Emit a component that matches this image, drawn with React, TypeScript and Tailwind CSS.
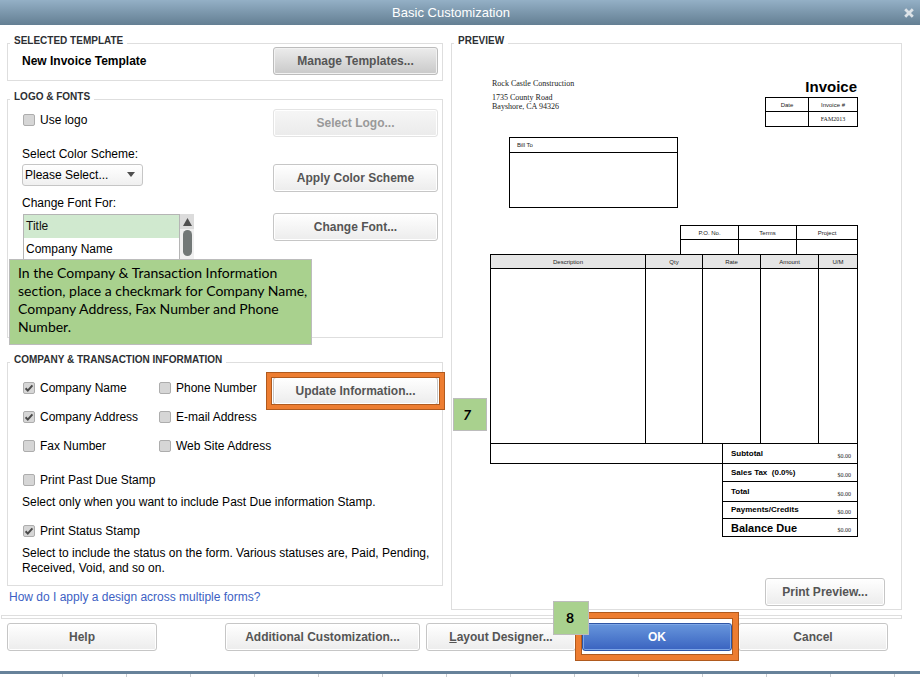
import React, { useState } from 'react';
import clsx from 'clsx';

type PanelProps = {
  title: string;
  children: React.ReactNode;
};

const Panel = ({ title, children }: PanelProps) => (
  <fieldset className="min-w-0 border border-[#dedede] px-[2px]">
    <legend className="px-1 pb-1 text-[10px] leading-[10px] font-bold text-[#2d2f33]">{title}</legend>
    {children}
  </fieldset>
);

type ButtonProps = React.ButtonHTMLAttributes<HTMLButtonElement> & {
  tone?: 'light' | 'dark' | 'primary';
};

const Button = ({ tone = 'light', className, children, ...rest }: ButtonProps) => (
  <button
    type="button"
    className={clsx(
      'block h-7 rounded-[3px] border text-center text-[12px] leading-4 font-bold whitespace-nowrap',
      tone === 'light' &&
        'border-[#c6c6c6] bg-linear-to-b from-white to-[#ececec] text-[#555555] shadow-[inset_0_0_0_1px_#ffffff] disabled:border-[#e4e4e4] disabled:from-[#f6f6f6] disabled:to-[#ebebeb] disabled:text-[#999999]',
      tone === 'dark' &&
        'border-[#bcbcbc] bg-linear-to-b from-[#ececec] to-[#c9c9c9] text-[#555555] shadow-[inset_0_0_0_1px_#f2f2f2]',
      tone === 'primary' &&
        'border-[#2f56a5] bg-linear-to-b from-[#6896dc] to-[#3a63c0] text-white shadow-[inset_0_0_0_1px_#7ea6e6]',
      className
    )}
    {...rest}
  >
    {children}
  </button>
);

type CheckProps = {
  label: string;
  defaultChecked?: boolean;
};

const Check = ({ label, defaultChecked }: CheckProps) => (
  <label className="flex h-4 items-center gap-[5px] pl-px whitespace-nowrap">
    <span className="relative block size-3">
      <input
        type="checkbox"
        defaultChecked={defaultChecked}
        className="peer block size-3 appearance-none rounded-[2px] border border-[#adadad] bg-[#d6d6d6]"
      />
      <svg
        viewBox="0 0 12 12"
        className="pointer-events-none absolute inset-0 hidden size-3 peer-checked:block"
        fill="none"
        stroke="#4a4a4a"
        strokeWidth="2"
      >
        <path d="M2.6 6.2 L4.8 8.6 L9.4 3.4" />
      </svg>
    </span>
    {label}
  </label>
);

/* Orange frame drawn around a button that the step points at */
const frame =
  'pointer-events-none absolute border-[#ed7d31] shadow-[0_0_0_1px_#b05a1e,inset_0_0_0_1px_#b05a1e]';

const note = 'absolute border border-[#bcbcbc] bg-[#a9d18e] text-black';

const table = 'table-fixed border-separate border-spacing-0 border-t border-l border-black';
const cell = 'border-r border-b border-black p-0 font-normal leading-[6px]';

const fonts = ['Title', 'Company Name', 'Company Address', 'Labels', 'Data'];

const totals = [
  { label: 'Subtotal', height: 'h-[20px]' },
  { label: 'Sales Tax  (0.0%)', height: 'h-[18px]' },
  { label: 'Total', height: 'h-[20px]' },
  { label: 'Payments/Credits', height: 'h-[17px]' },
  { label: 'Balance Due', height: 'h-[18px]', large: true },
];

const LogoAndFonts = () => {
  const [font, setFont] = useState('Title');

  return (
    <div className="relative mt-[11px]">
      <Panel title="LOGO & FONTS">
        <div className="-mt-[3px] flex justify-between pr-[2px] pb-[7px] pl-3">
          <div className="pt-[9px] leading-4">
            <Check label="Use logo" />
            <label htmlFor="scheme" className="mt-[18px] block">
              Select Color Scheme:
            </label>
            <div className="relative mt-[2px] w-[121px]">
              <select
                id="scheme"
                className="block h-[22px] w-full appearance-none rounded-[3px] border border-[#c6c6c6] bg-linear-to-b from-white to-[#f0f0f0] pl-[2px] text-[12px] text-black"
              >
                <option>Please Select...</option>
              </select>
              <svg viewBox="0 0 8 5" className="pointer-events-none absolute top-2 right-2 h-[5px] w-2" fill="#4f4f4f">
                <path d="M0 0h8L4 5z" />
              </svg>
            </div>
            <label htmlFor="font" className="mt-[9px] block">
              Change Font For:
            </label>
            <div className="mt-[3px] ml-px flex h-[116px] w-[171px]">
              <select
                id="font"
                size={5}
                value={font}
                onChange={(e) => setFont(e.target.value)}
                className="block h-full min-w-0 flex-1 overflow-hidden rounded-none border border-[#b5b5b5] bg-white p-0 text-[12px] text-black outline-none [scrollbar-width:none]"
              >
                {fonts.map((name) => (
                  <option
                    key={name}
                    value={name}
                    className="h-[23px] px-[2px] pt-1 pb-0 leading-4 checked:bg-[#d0e9cf] checked:bg-linear-to-b checked:from-[#d0e9cf] checked:to-[#d0e9cf]"
                  >
                    {name}
                  </option>
                ))}
              </select>
              <div className="flex w-[14px] flex-col items-center bg-[#f0f0f0]">
                <div className="flex h-[15px] w-full items-center justify-center bg-[#dcdcdc]">
                  <svg viewBox="0 0 9 8" className="h-2 w-[9px]" fill="#505050">
                    <path d="M4.5 0L9 8H0z" />
                  </svg>
                </div>
                <div className="mt-px h-[26px] w-[9px] rounded-full bg-[#727877]" />
              </div>
            </div>
          </div>
          <div className="pt-[6px]">
            <Button disabled className="w-[165px]">
              Select Logo...
            </Button>
            <Button className="mt-[27px] w-[165px]">Apply Color Scheme</Button>
            <Button className="mt-[21px] w-[165px]">Change Font...</Button>
          </div>
        </div>
      </Panel>
      <p
        className={clsx(
          note,
          'top-[167px] left-[2px] h-[86px] w-[303px] pt-1 pl-2 font-[Lato,sans-serif] text-[14px] leading-[18px] [font-variant-ligatures:none]'
        )}
      >
        In the Company &amp; Transaction Information section, place a checkmark for Company Name, Company Address, Fax
        Number and Phone Number.
      </p>
    </div>
  );
};

const CompanyInfo = () => (
  <div className="mt-[17px]">
    <Panel title="COMPANY & TRANSACTION INFORMATION">
      <div className="-mt-[3px] pr-[2px] pb-[9px] pl-3">
        <div className="flex justify-between">
          <div className="grid grid-cols-[136px_auto] gap-y-[13px] pt-[14px]">
            <Check label="Company Name" defaultChecked />
            <Check label="Phone Number" />
            <Check label="Company Address" defaultChecked />
            <Check label="E-mail Address" />
            <Check label="Fax Number" />
            <Check label="Web Site Address" />
          </div>
          <div className="relative mt-[11px] h-7">
            <Button className="w-[165px]">Update Information...</Button>
            <span className={clsx(frame, '-inset-x-[6px] -inset-y-1 border-4')} />
          </div>
        </div>
        <div className="mt-[18px]">
          <Check label="Print Past Due Stamp" />
        </div>
        <p className="mt-[7px] leading-[15px]">Select only when you want to include Past Due information Stamp.</p>
        <div className="mt-[13px]">
          <Check label="Print Status Stamp" defaultChecked />
        </div>
        <p className="mt-[7px] leading-[15px]">
          Select to include the status on the form. Various statuses are, Paid, Pending, Received, Void, and so on.
        </p>
      </div>
    </Panel>
  </div>
);

const Invoice = () => (
  <div className="mr-[41px] ml-[36px] pt-7 text-[6px] leading-[6px] text-[#222222]">
    <div className="flex justify-between">
      <address className="pl-[2px] font-['Liberation_Serif',serif] text-[8px] leading-[9px] not-italic">
        <p className="mb-[3px] leading-3">Rock Castle Construction</p>
        <p>1735 County Road</p>
        <p>Bayshore, CA 94326</p>
      </address>
      <div className="w-[93px]">
        <h2 className="mb-px pr-px text-right text-[15px] leading-[18px] font-bold text-black">Invoice</h2>
        <table className={clsx(table, 'w-full')}>
          <thead>
            <tr className="h-[14px]">
              <th className={clsx(cell, 'w-[43px]')}>Date</th>
              <th className={cell}>Invoice #</th>
            </tr>
          </thead>
          <tbody>
            <tr className="h-[15px] text-center">
              <td className={cell} />
              <td className={clsx(cell, "font-['Liberation_Serif',serif]")}>FAM2013</td>
            </tr>
          </tbody>
        </table>
      </div>
    </div>

    <table className={clsx(table, 'mt-[10px] ml-[19px] w-[169px]')}>
      <thead>
        <tr className="h-[15px] text-left">
          <th className={clsx(cell, 'pl-[7px]')}>Bill To</th>
        </tr>
      </thead>
      <tbody>
        <tr className="h-[55px]">
          <td className={cell} />
        </tr>
      </tbody>
    </table>

    <table className={clsx(table, 'mt-[17px] ml-auto w-[178px]')}>
      <thead>
        <tr className="h-[14px]">
          <th className={clsx(cell, 'w-[58px]')}>P.O. No.</th>
          <th className={clsx(cell, 'w-[58px]')}>Terms</th>
          <th className={cell}>Project</th>
        </tr>
      </thead>
      <tbody>
        <tr className="h-[14px]">
          <td className="border-r border-black p-0" />
          <td className="border-r border-black p-0" />
          <td className="border-r border-black p-0" />
        </tr>
      </tbody>
    </table>

    <table className={clsx(table, 'w-full')}>
      <thead>
        <tr className="h-[14px] bg-[#e5e5e5]">
          <th className={cell}>Description</th>
          <th className={clsx(cell, 'w-[57px]')}>Qty</th>
          <th className={clsx(cell, 'w-[58px]')}>Rate</th>
          <th className={clsx(cell, 'w-[58px]')}>Amount</th>
          <th className={clsx(cell, 'w-[39px]')}>U/M</th>
        </tr>
      </thead>
      <tbody>
        <tr className="h-[175px]">
          <td className={cell} />
          <td className={cell} />
          <td className={cell} />
          <td className={cell} />
          <td className={cell} />
        </tr>
      </tbody>
    </table>

    <div className="flex items-start">
      <div className="h-5 flex-1 border-b border-l border-black" />
      <table className="w-[136px] table-fixed border-separate border-spacing-0 border-l border-black">
        <tbody>
          {totals.map((row) => (
            <tr key={row.label} className={row.height}>
              <th
                className={clsx(
                  'w-[100px] border-b border-black p-0 pl-2 text-left font-bold whitespace-pre text-black',
                  row.large ? 'text-[11px] leading-[10px]' : 'text-[8px] leading-[8px]'
                )}
              >
                {row.label}
              </th>
              <td className="border-r border-b border-black p-0 pt-1 pr-[6px] text-right font-['Liberation_Serif',serif] leading-[6px]">
                $0.00
              </td>
            </tr>
          ))}
        </tbody>
      </table>
    </div>
  </div>
);

const App = () => {
  return (
    <div className="bg-white font-['Liberation_Sans',Arial,sans-serif] text-[12px] leading-4 text-black">
      {/* Title bar */}
      <header className="flex h-[25px] items-center bg-linear-to-b from-[#94b0c6] to-[#647f93] text-white">
        <h1 className="flex-1 text-center text-[13px]">Basic Customization</h1>
        <button type="button" aria-label="Close" className="flex w-[18px] items-center">
          <svg viewBox="0 0 10 10" className="ml-[2px] size-[10px]" stroke="#dde3e8" strokeWidth="2.8">
            <path d="M1.2 1.2L8.8 8.8M8.8 1.2L1.2 8.8" />
          </svg>
        </button>
      </header>

      <main className="grid grid-cols-[436fr_451fr] gap-2 pt-[11px] pr-[18px] pl-[7px]">
        {/* Settings */}
        <div>
          <Panel title="SELECTED TEMPLATE">
            <div className="-mt-[3px] flex items-center justify-between pr-[2px] pb-[5px] pl-3">
              <span className="font-bold">New Invoice Template</span>
              <Button tone="dark" className="w-[165px]">
                Manage Templates...
              </Button>
            </div>
          </Panel>
          <LogoAndFonts />
          <CompanyInfo />
          <a href="#help" className="mt-[3px] ml-[2px] block text-[#3d5fc4]">
            How do I apply a design across multiple forms?
          </a>
        </div>

        {/* Preview */}
        <div className="relative">
          <Panel title="PREVIEW">
            <Invoice />
            <div className="mt-[41px] flex justify-end pr-[14px] pb-[3px]">
              <Button className="w-[120px]">Print Preview...</Button>
            </div>
          </Panel>
          <span
            className={clsx(
              note,
              'top-[362px] left-[2px] h-[33px] w-[34px] pr-[6px] text-center font-[Lato,sans-serif] text-[14px] leading-[31px] font-bold italic'
            )}
          >
            7
          </span>
        </div>
      </main>

      <div className="mt-[5px] mr-[18px] ml-px h-1 border border-[#dedede]" />

      <footer className="flex gap-[6px] pt-1 pr-8 pb-5 pl-[7px]">
        <Button className="w-[150px]">Help</Button>
        <Button className="ml-auto w-[195px]">Additional Customization...</Button>
        <Button className="w-[150px]">
          <span className="underline">L</span>ayout Designer...
        </Button>
        <div className="relative">
          <Button tone="primary" className="w-[150px]">
            OK
          </Button>
          <span className={clsx(frame, '-inset-x-[6px] -top-[10px] -bottom-[9px] border-[5px]')} />
          <span
            className={clsx(
              note,
              '-top-[22px] -left-[29px] h-[34px] w-[36px] pr-[2px] text-center font-[Lato,sans-serif] text-[14px] leading-8 font-bold'
            )}
          >
            8
          </span>
        </div>
        <Button className="w-[150px]">Cancel</Button>
      </footer>

      {/* Edge of the sheet behind the dialog */}
      <div className="h-[3px] bg-[#67829a]" />
      <div className="flex h-[3px] overflow-hidden">
        <div className="w-[63px] shrink-0 border-r border-[#c9ccd0]" />
        {Array.from({ length: 13 }, (_, i) => (
          <div key={i} className="w-16 shrink-0 border-r border-[#c9ccd0]" />
        ))}
      </div>
    </div>
  );
};

export default App;
